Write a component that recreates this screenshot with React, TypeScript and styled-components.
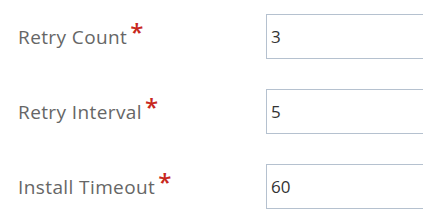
import React from "react";
import styled, { createGlobalStyle } from "styled-components";

const GlobalStyle = createGlobalStyle`
  html, body {
    margin: 0;
    padding: 0;
    background: #ffffff;
    overflow: hidden;
  }

  body {
    font-family: "Open Sans", "Noto Sans", sans-serif;
  }
`;

const Form = styled.form`
  display: grid;
  grid-template-columns: 248px 200px;
  row-gap: 30px;
  padding: 14px 0 0 18px;
  width: 600px;
`;

const Label = styled.label`
  display: flex;
  align-items: center;
  height: 45px;

  font-size: 19px;
  line-height: 26px;
  color: #666666;
  letter-spacing: 0.4px;
`;

const Required = styled.span`
  position: relative;
  top: -3px;
  margin-left: 3px;

  color: #c8281e;
  font-size: 24px;
  font-weight: 600;
  line-height: 1;
`;

const Input = styled.input`
  box-sizing: border-box;
  height: 45px;
  width: 200px;
  padding: 0 4px;
  margin: 0;

  border: 1px solid #b5c1cf;
  border-radius: 0;
  outline: none;
  background: #ffffff;

  font-family: "Open Sans", "Noto Sans", sans-serif;
  font-size: 17px;
  color: #333333;
`;

type Field = {
  id: string;
  label: string;
  value: string;
};

const fields: Field[] = [
  { id: "retryCount", label: "Retry Count", value: "3" },
  { id: "retryInterval", label: "Retry Interval", value: "5" },
  { id: "installTimeout", label: "Install Timeout", value: "60" },
];

export default function App() {
  return (
    <>
      <GlobalStyle />
      <Form onSubmit={(e) => e.preventDefault()}>
        {fields.map((f) => (
          <React.Fragment key={f.id}>
            <Label htmlFor={f.id}>
              <span>
                {f.label}
                <Required>*</Required>
              </span>
            </Label>
            <Input id={f.id} defaultValue={f.value} />
          </React.Fragment>
        ))}
      </Form>
    </>
  );
}
